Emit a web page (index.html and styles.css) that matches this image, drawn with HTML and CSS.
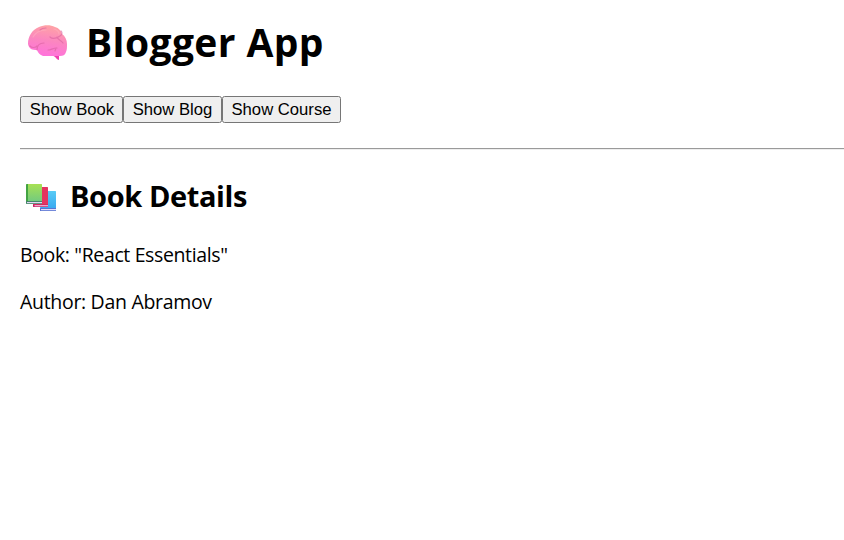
FILE: index.html
```html
<!DOCTYPE html>
<html lang="en">
<head>
<meta charset="utf-8">
<title>Blogger App</title>
<link rel="stylesheet" href="styles.css">
</head>
<body>
<main class="app">
  <h1 class="title">
    <svg class="brain" viewBox="0 0 40 36" aria-hidden="true">
      <defs>
        <linearGradient id="pink" x1=".6" y1="0" x2=".4" y2="1">
          <stop offset="0" stop-color="#ffa3a4"/>
          <stop offset=".5" stop-color="#fb86c0"/>
          <stop offset="1" stop-color="#ff72dc"/>
        </linearGradient>
      </defs>
      <path d="M25.500 30l5.500 0 0 5c-2 0-3-3-5.500-4z" fill="#f03fb0"/>
      <path d="M0 19C0 11 4 5 11 2c5-2 11-2.500 16 0 4 1 6 4 7 7 3 2 5 6 5 10 0 3 0 6-1 8-1 3-3 4-6 4H15c-3-1-5-3-6-6-5 0-8-1-9-6z" fill="url(#pink)"/>
      <path d="M9 25c0-4 2-7 7-7M20 25c3 0 5-2 9-2M28 23l-1 3M22 12c3 3 7 1 10-1s2-4 1-5M29 12c1 3 4 3 6 6M12 5c2-2 4-2 6-2M2 21c2 2 5 2 7 0" fill="none" stroke="#d9619f" stroke-width="1.200" stroke-linecap="round" opacity=".6"/>
      <path d="M5 12c3-5 8-7 13-7M26 4c3 1 5 3 5 5" fill="none" stroke="#ffb5c4" stroke-width="1.200" stroke-linecap="round" opacity=".45"/>
    </svg>
    <span>Blogger App</span>
  </h1>
  <div class="actions"><button type="button">Show Book</button><button type="button">Show Blog</button><button type="button">Show Course</button></div>
  <hr class="rule">
  <h2 class="subtitle">
    <svg class="books" viewBox="0 0 31 28" aria-hidden="true">
      <defs>
        <linearGradient id="green" x1="0" y1="0" x2="0" y2="1"><stop offset="0" stop-color="#a7e153"/><stop offset="1" stop-color="#6bc785"/></linearGradient>
        <linearGradient id="blue" x1="0" y1="0" x2="0" y2="1"><stop offset="0" stop-color="#58cbf5"/><stop offset="1" stop-color="#35a4ef"/></linearGradient>
      </defs>
      <path d="M15 7h14.500q.5 0 .5.500V27H14z" fill="url(#blue)"/>
      <path d="M14 24H30V27H14z" fill="#5875d2"/>
      <path d="M15 25h15v1.200H15z" fill="#e3dcfb"/>
      <path d="M7 3h14.500q.5 0 .5.500V23H8q-1 0-1-1z" fill="#e4345f"/>
      <path d="M7 20.500h15V23H8q-1 0-1-1z" fill="#c51c61"/>
      <path d="M8.500 21.200H22v1.100H8.500z" fill="#f4cfe6"/>
      <path d="M1 0h14.500q.5 0 .5.500V20H1q-1 0-1-1V1q0-1 1-1z" fill="url(#green)"/>
      <path d="M1 0h1V18H0V1q0-1 1-1z" fill="#43a343"/>
      <path d="M0 17h16v3H1q-1 0-1-1z" fill="#458469"/>
      <path d="M1 18H16v1.200H1z" fill="#dfd6f2"/>
    </svg>
    <span>Book Details</span>
  </h2>
  <p class="line">Book: "React Essentials"</p>
  <p class="line author">Author: Dan Abramov</p>
</main>
</body>
</html>
```
FILE: styles.css
```css
body {
  margin: 0;
  background: #fff;
  color: #000;
  font-family: "Segoe UI", "Open Sans", "Noto Sans", sans-serif;
}
.app {
  padding: 15px 0 0 20px;
}
.title, .subtitle {
  display: flex;
  align-items: flex-start;
  margin: 0;
  font-weight: 700;
  white-space: nowrap;
}
.title {
  height: 53px;
  font-size: 39px;
  line-height: 54px;
  letter-spacing: 0.4px;
}
.brain {
  width: 40px;
  height: 36px;
  margin: 10px 18px 0 8px;
}
.actions {
  display: flex;
  margin-top: 28px;
}
.actions button {
  height: 27px;
  margin: 0;
  padding: 0;
  border: 1px solid #767676;
  border-radius: 2.5px;
  background: #efefef;
  color: #000;
  font: 16.667px/25px "Liberation Sans", Arial, sans-serif;
}
.actions button:nth-child(1) { width: 103px; padding-left: 1px; }
.actions button:nth-child(2) { width: 99px; }
.actions button:nth-child(3) { width: 119px; }
.rule {
  height: 0;
  margin: 25px 0 26px;
  border: 0;
  border-top: 1px solid #9a9a9a;
  border-bottom: 1px solid #eee;
}
.subtitle {
  height: 40px;
  font-size: 29px;
  line-height: 40px;
  letter-spacing: -0.4px;
}
.books {
  width: 31px;
  height: 28px;
  margin: 8px 13px 0 6px;
}
.line {
  margin: 25px 0 0;
  font-size: 19.5px;
  line-height: 27px;
  letter-spacing: -0.37px;
}
.author {
  margin-top: 20px;
  letter-spacing: -0.31px;
}
```
